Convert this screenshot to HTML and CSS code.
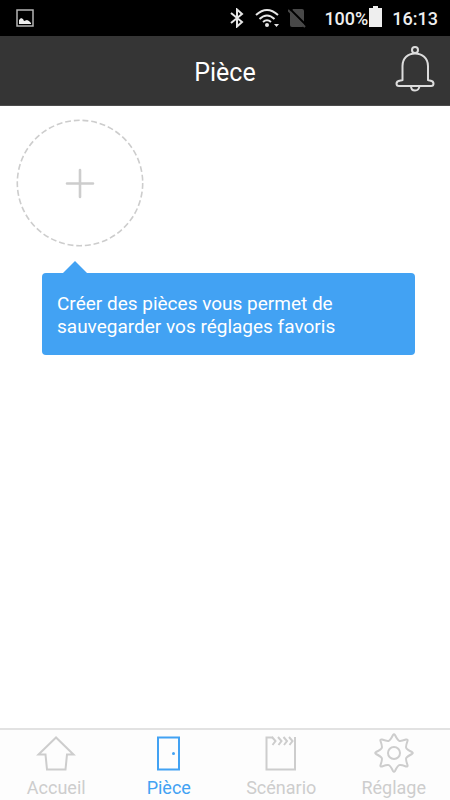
FILE: index.html
```html
<!DOCTYPE html>
<html lang="fr">
<head>
<meta charset="utf-8">
<meta name="viewport" content="width=device-width, initial-scale=1">
<title>Pièce</title>
<link rel="stylesheet" href="styles.css">
</head>
<body>
<div class="status">
  <svg class="status-picture" width="18" height="18" viewBox="0 0 18 18" aria-hidden="true"><path d="M1 1H17V17H1Z" fill="none" stroke="#b4b4b4" stroke-width="1.5"/><path d="M3 15V11L5 9L7 10L8 12L11 11L13 12L15 14V15Z" fill="#eee"/></svg>
  <svg class="status-bluetooth" width="14" height="20" viewBox="0 0 14 20" aria-hidden="true"><path d="M1 5L12 14L7 18.500V1.500L12 6L1 15" fill="none" stroke="#e6e6e6" stroke-width="2"/></svg>
  <svg class="status-wifi" width="24" height="20" viewBox="0 0 24 20" aria-hidden="true"><g fill="none" stroke="#e6e6e6" stroke-width="2"><path d="M1 7Q12 -3 23 7"/><path d="M4.500 11Q12 4 19.500 11"/><path d="M8 14Q12 10.500 16 14"/></g><circle cx="12" cy="17" r="2" fill="#e6e6e6"/><path d="M19 16H24L21.500 19Z" fill="#e6e6e6"/></svg>
  <svg class="status-sim" width="18" height="20" viewBox="0 0 18 20" aria-hidden="true"><path d="M5 1H14Q16 1 16 3V17Q16 19 14 19H4Q2 19 2 17V5Z" fill="#484848"/><path d="M2 1L19 18" stroke="#000" stroke-width="2"/><path d="M0 2L17 19" stroke="#484848" stroke-width="2"/></svg>
  <span>100%</span>
  <svg class="status-battery" width="14" height="22" viewBox="0 0 14 22" aria-hidden="true"><path d="M1 2H5V0H10V2H14V21H1Z" fill="#eee"/></svg>
  <span>16:13</span>
</div>
<header class="header">
  <h1 class="title">Pièce</h1>
  <button class="bell" type="button" aria-label="Notifications">
    <svg width="40" height="46" viewBox="0 0 40 46" fill="none" stroke="#dcdcdc" stroke-width="2" aria-hidden="true"><circle cx="20" cy="4" r="3"/><path d="M7.500 34V20C7.500 12 13 7.500 20 7.500S33 12 33 20V34C34 35 38.500 34 38.500 37.500Q38.500 40 36 40H4Q1.500 40 1.500 37.500C1.500 34 6.500 35 7.500 34Z"/><path d="M16 40Q16 44.500 20 44.500T24.500 40"/></svg>
  </button>
</header>
<main class="content">
  <button class="add" type="button" aria-label="Ajouter une pièce">
    <svg width="128" height="128" viewBox="0 0 128 128" fill="none" stroke="#cdcdcd" aria-hidden="true"><circle cx="64" cy="64" r="62.700" stroke-width="1.600" stroke-dasharray="5.900 2.850"/><path d="M51 64.500H77M64 51V78" stroke-width="2.600" stroke-linecap="round"/></svg>
  </button>
  <p class="tip">Créer des pièces vous permet de sauvegarder vos réglages favoris</p>
</main>
<nav class="tabs">
  <a class="tab" href="#accueil"><svg class="tab-icon" viewBox="0 0 40 40" aria-hidden="true"><path d="M20 4.500L2.500 21.500H9.500L11 36.500H29.500L31 21.500H37.500Z"/></svg>Accueil</a>
  <a class="tab tab-active" href="#piece" aria-current="page"><svg class="tab-icon" viewBox="0 0 40 40" aria-hidden="true"><path d="M9 4.500H30V36.500H9Z"/><circle cx="24.500" cy="20.500" r="1.500" fill="currentColor" stroke="none"/></svg>Pièce</a>
  <a class="tab" href="#scenario"><svg class="tab-icon" viewBox="0 0 40 40" aria-hidden="true"><path d="M12 4.500H5.500V36.500H34V4"/><path d="M11 4L14.500 8L11.500 12M17 4L20.500 8L17.500 12M22.500 4L26 8L23 12M28 4L31.500 8L28.500 12"/></svg>Scénario</a>
  <a class="tab" href="#reglage"><svg class="tab-icon" viewBox="0 0 40 40" aria-hidden="true"><path d="M38 19Q39.500 20 38 21C31 24.500 31 25 33.500 32Q34 34 32 33.500C25 31 24.500 31 21 38Q20 39.500 19 38C15.500 31 15 31 8 33.500Q6 34 6.500 32C9 25 9 24.500 2 21Q.5 20 2 19C9 15.500 9 15 6.500 8Q6 6 8 6.500C15 9 15.500 9 19 2Q20 .5 21 2C24.500 9 25 9 32 6.500Q34 6 33.500 8C31 15 31 15.500 38 19Z"/><circle cx="20" cy="20" r="6"/></svg>Réglage</a>
</nav>
</body>
</html>
```
FILE: styles.css
```css
* {
  box-sizing: border-box;
}

body {
  margin: 0;
  min-height: 100vh;
  display: flex;
  flex-direction: column;
  background: #fff;
  font-family: Roboto, "Liberation Sans", sans-serif;
}

button {
  padding: 0;
  border: 0;
  background: none;
  cursor: pointer;
}

svg {
  display: block;
}

.status {
  display: flex;
  align-items: center;
  height: 36px;
  padding: 0 12px 0 16px;
  background: #000;
  color: #eee;
  font-size: 18px;
  font-weight: 500;
}

.status-picture {
  margin-right: auto;
}

.status-wifi {
  margin-left: 11px;
}

.status-sim {
  margin: 0 18px 0 9px;
}

.status-battery {
  margin-right: 10px;
  margin-bottom: 2px;
}

.header {
  display: grid;
  grid-template-columns: 1fr auto 1fr;
  align-items: center;
  height: 70px;
  padding: 0 15px;
  background: #353535;
  border-bottom: 1px solid #4c4c4c;
}

.title {
  grid-column: 2;
  margin: 0;
  padding-top: 3px;
  color: #fff;
  font-size: 25px;
  font-weight: 400;
}

.bell {
  justify-self: end;
  padding-bottom: 3px;
}

.content {
  flex: 1;
  padding: 13px 35px 0 16px;
}

.add {
  display: block;
}

.tip {
  position: relative;
  margin: 26px 0 0 26px;
  padding: 19px 64px 17px 15px;
  border-radius: 4px;
  background: #42a2f3;
  color: #fff;
  font-size: 19px;
  line-height: 23px;
}

.tip::before {
  content: "";
  position: absolute;
  top: -12px;
  left: 20px;
  border: solid transparent;
  border-width: 0 13px 13px;
  border-bottom-color: #42a2f3;
}

.tabs {
  display: grid;
  grid-template-columns: repeat(4, 1fr);
  height: 72px;
  border-top: 2px solid #e2e2e2;
  background: #fdfdfd;
}

.tab {
  display: flex;
  flex-direction: column;
  align-items: center;
  padding-top: 3px;
  color: #cdcdcd;
  font-size: 18px;
  line-height: 30px;
  text-decoration: none;
}

.tab-active {
  color: #42a2f3;
}

.tab-icon {
  flex: none;
  width: 40px;
  height: 40px;
  fill: none;
  stroke: currentColor;
  stroke-width: 2;
}
```
